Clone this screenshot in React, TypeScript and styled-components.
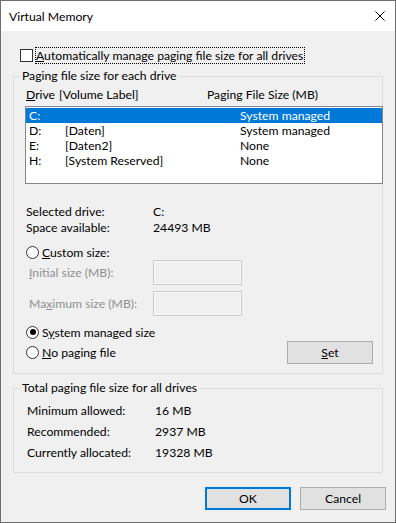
import React from 'react';
import styled, { createGlobalStyle } from 'styled-components';

const GlobalStyle = createGlobalStyle`
    html, body {
        margin: 0;
        padding: 0;
        background: #f0f0f0;
    }
    * {
        box-sizing: border-box;
    }
`

const FONT = `"Lato", "Noto Sans", sans-serif`;
const FONT_SIZE = '12.2px';
const GRAY_TEXT = '#8f8f8f';

type Drive = { letter: string; label: string; size: string };

const drives: Drive[] = [
    { letter: 'C:', label: '', size: 'System managed' },
    { letter: 'D:', label: '[Daten]', size: 'System managed' },
    { letter: 'E:', label: '[Daten2]', size: 'None' },
    { letter: 'H:', label: '[System Reserved]', size: 'None' },
];

const totals = [
    { label: 'Minimum allowed:', value: '16 MB' },
    { label: 'Recommended:', value: '2937 MB' },
    { label: 'Currently allocated:', value: '19328 MB' },
];

const App: React.FC = () => {
    return (
        <>
            <GlobalStyle />
            <Window>
                <TitleBar>
                    <span>Virtual Memory</span>
                    <CloseIcon width="10" height="10" viewBox="0 0 10 10">
                        <path d="M0.5 0.5 L9.5 9.5 M9.5 0.5 L0.5 9.5" stroke="#000" strokeWidth="1" fill="none" />
                    </CloseIcon>
                </TitleBar>
                <Body>
                    <CheckRow>
                        <CheckBox />
                        <FocusLabel><u>A</u>utomatically manage paging file size for all drives</FocusLabel>
                    </CheckRow>

                    <Group $top={5}>
                        <Legend>Paging file size for each drive</Legend>
                        <DriveContent>
                            <HeaderRow>
                                <span><u>D</u>rive</span>
                                <span>[Volume Label]</span>
                                <span>Paging File Size (MB)</span>
                            </HeaderRow>
                            <ListBox>
                                {drives.map((d, i) => (
                                    <ListRow key={d.letter} $selected={i === 0}>
                                        <span>{d.letter}</span>
                                        <span>{d.label}</span>
                                        <span>{d.size}</span>
                                    </ListRow>
                                ))}
                            </ListBox>
                            <InfoGrid>
                                <span>Selected drive:</span>
                                <span>C:</span>
                                <span>Space available:</span>
                                <span>24493 MB</span>
                            </InfoGrid>
                            <RadioRow $top={9} $height={15}>
                                <Radio />
                                <span><u>C</u>ustom size:</span>
                            </RadioRow>
                            <SizeRow $top={0}>
                                <DisabledLabel><u>I</u>nitial size (MB):</DisabledLabel>
                                <SizeBox />
                            </SizeRow>
                            <SizeRow $top={6}>
                                <DisabledLabel>Ma<u>x</u>imum size (MB):</DisabledLabel>
                                <SizeBox />
                            </SizeRow>
                            <RadioRow $top={8} $height={16}>
                                <Radio $checked />
                                <span>S<u>y</u>stem managed size</span>
                            </RadioRow>
                            <ActionRow>
                                <RadioRow $top={0} $height={23}>
                                    <Radio />
                                    <span><u>N</u>o paging file</span>
                                </RadioRow>
                                <SetButton><u>S</u>et</SetButton>
                            </ActionRow>
                        </DriveContent>
                    </Group>

                    <Group $top={7}>
                        <Legend>Total paging file size for all drives</Legend>
                        <TotalsGrid>
                            {totals.map((t) => (
                                <React.Fragment key={t.label}>
                                    <span>{t.label}</span>
                                    <span>{t.value}</span>
                                </React.Fragment>
                            ))}
                        </TotalsGrid>
                    </Group>

                    <ButtonRow>
                        <DialogButton $default>OK</DialogButton>
                        <DialogButton>Cancel</DialogButton>
                    </ButtonRow>
                </Body>
            </Window>
        </>
    );
}

const Window = styled.div`
    width: 396px;
    height: 523px;
    border: 1px solid #6e6e6e;
    background: #f0f0f0;
    font-family: ${FONT};
    font-size: ${FONT_SIZE};
    color: #000;
    display: flex;
    flex-direction: column;
    overflow: hidden;
`

const TitleBar = styled.div`
    height: 30px;
    flex: none;
    background: #fff;
    display: flex;
    align-items: center;
    justify-content: space-between;
    padding: 0 10px 0 8px;
`

const CloseIcon = styled.svg`
    display: block;
`

const Body = styled.div`
    padding: 16px 12px 0 12px;
`

const CheckRow = styled.div`
    display: flex;
    align-items: center;
    height: 17px;
    margin-left: 7px;
    gap: 2px;
`

const CheckBox = styled.span`
    width: 13px;
    height: 13px;
    border: 1px solid #333;
    background: #fff;
`

const FocusLabel = styled.span`
    border: 1px dotted #000;
    padding: 0 1px 0 0;
    line-height: 15px;
`

const Group = styled.fieldset<{ $top: number }>`
    margin: ${(p) => p.$top}px 0 0 0;
    padding: 0;
    border: 1px solid #dcdcdc;
    min-width: 0;
`

const Legend = styled.legend`
    margin-left: 6px;
    padding: 0 2px;
    line-height: 14px;
`

const DriveContent = styled.div`
    padding: 4px 0 9px 11px;
`

const HeaderRow = styled.div`
    display: grid;
    grid-template-columns: 33px 148px auto;
    padding-left: 1px;
    line-height: 16px;
`

const ListBox = styled.div`
    margin-top: 3px;
    width: 358px;
    height: 78px;
    border: 1px solid #828790;
    background: #fff;
    padding: 1px 0;
`

const ListRow = styled.div<{ $selected?: boolean }>`
    display: grid;
    grid-template-columns: 36px 175px auto;
    height: 15px;
    line-height: 15px;
    padding-left: 3px;
    background: ${(p) => (p.$selected ? '#0078d7' : 'transparent')};
    color: ${(p) => (p.$selected ? '#fff' : '#000')};
`

const InfoGrid = styled.div`
    display: grid;
    grid-template-columns: 127px auto;
    margin-top: 20px;
    padding-left: 1px;
    line-height: 16px;
`

const RadioRow = styled.div<{ $top: number; $height: number }>`
    display: flex;
    align-items: center;
    gap: 3px;
    margin-top: ${(p) => p.$top}px;
    height: ${(p) => p.$height}px;
    padding-left: 1px;
`

const Radio = styled.span<{ $checked?: boolean }>`
    width: 13px;
    height: 13px;
    border: 1px solid #333;
    border-radius: 50%;
    background: #fff;
    display: flex;
    align-items: center;
    justify-content: center;
    &::after {
        content: '';
        width: 6px;
        height: 6px;
        border-radius: 50%;
        background: ${(p) => (p.$checked ? '#000' : 'transparent')};
    }
`

const SizeRow = styled.div<{ $top: number }>`
    display: grid;
    grid-template-columns: 124px 89px;
    align-items: center;
    margin-top: ${(p) => p.$top}px;
    padding-left: 4px;
`

const DisabledLabel = styled.span`
    color: ${GRAY_TEXT};
`

const SizeBox = styled.span`
    height: 25px;
    border: 1px solid #cacaca;
    box-shadow: inset 0 0 0 1px #fafafa;
    background: #f0f0f0;
`

const ActionRow = styled.div`
    display: flex;
    align-items: center;
    margin-top: 1px;
`

const ButtonBase = styled.button`
    height: 23px;
    width: 86px;
    font-family: ${FONT};
    font-size: ${FONT_SIZE};
    color: #000;
    background: #e1e1e1;
    border: 1px solid #adadad;
    padding: 0;
`

const SetButton = styled(ButtonBase)`
    margin-left: auto;
    margin-right: 9px;
`

const TotalsGrid = styled.div`
    display: grid;
    grid-template-columns: 128px auto;
    padding: 5px 0 9px 13px;
    line-height: 21px;
`

const ButtonRow = styled.div`
    display: flex;
    justify-content: flex-end;
    gap: 9px;
    margin: 14px -3px 0 0;
`

const DialogButton = styled(ButtonBase)<{ $default?: boolean }>`
    border: ${(p) => (p.$default ? '2px solid #0078d7' : '1px solid #adadad')};
`

export default App;
